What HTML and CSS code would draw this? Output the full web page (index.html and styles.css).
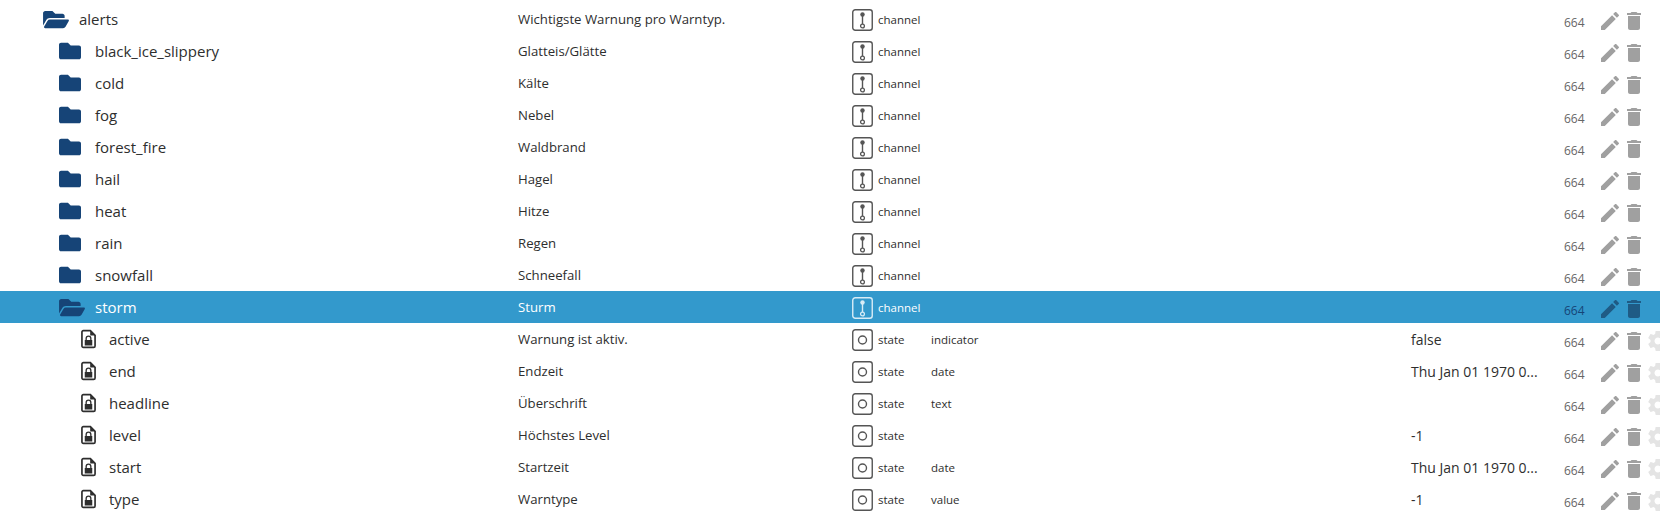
FILE: index.html
```html
<!DOCTYPE html>
<html lang="en">
<head>
    <meta charset="UTF-8">
    <title>Objects</title>
    <link rel="stylesheet" href="styles.css">
</head>
<body>
    <svg class="sprite" xmlns="http://www.w3.org/2000/svg">
        <symbol id="i-folder" viewBox="0 0 512 512"><path d="M464 128H272l-64-64H48C21.49 64 0 85.49 0 112v288c0 26.51 21.49 48 48 48h416c26.51 0 48-21.49 48-48V176c0-26.51-21.49-48-48-48z"/></symbol>
        <symbol id="i-open" viewBox="0 0 576 512"><path d="M572.694 292.093L500.27 416.248A63.997 63.997 0 0 1 444.989 448H45.025c-18.523 0-30.064-20.093-20.731-36.093l72.424-124.155A64 64 0 0 1 152 256h399.964c18.523 0 30.064 20.093 20.73 36.093zM152 224h328v-48c0-26.51-21.49-48-48-48H272l-64-64H48C21.49 64 0 85.49 0 112v278.046l69.077-118.418C86.214 242.25 118.202 224 152 224z"/></symbol>
        <symbol id="i-file" viewBox="0 0 16 20"><path d="M2.5 1H10l5 5v11.5a1.5 1.5 0 0 1-1.5 1.5h-11A1.5 1.5 0 0 1 1 17.500v-15A1.500 1.500 0 0 1 2.500 1z" fill="none" stroke="currentColor" stroke-width="1.800"/><path d="M9.800 .8v5.400h5.400z"/><path d="M4.800 11v-1.500a3.200 3.200 0 0 1 6.400 0V11h.8v6H4v-6zM6.200 11h3.600V9.500a1.800 1.800 0 0 0-3.600 0z"/></symbol>
        <symbol id="i-channel" viewBox="0 0 21 22"><rect x=".75" y=".75" width="19.500" height="20.500" rx="2.500" fill="none" stroke="currentColor" stroke-width="1.400"/><circle cx="10.500" cy="5.500" r="2.200"/><path d="M9.800 6h1.400v9h-1.400z"/><circle cx="10.500" cy="17" r="1.900" fill="none" stroke="currentColor" stroke-width="1.300"/></symbol>
        <symbol id="i-state" viewBox="0 0 21 22"><rect x=".75" y=".75" width="19.500" height="20.500" rx="2.500" fill="none" stroke="currentColor" stroke-width="1.400"/><circle cx="10.500" cy="11" r="4" fill="none" stroke="currentColor" stroke-width="1.400"/></symbol>
        <symbol id="i-edit" viewBox="3 3 18 18"><path d="M3 17.250V21h3.750L17.810 9.940l-3.750-3.750L3 17.250zM20.710 7.040c.39-.39.39-1.020 0-1.410l-2.340-2.340c-.39-.39-1.020-.39-1.410 0l-1.830 1.830 3.750 3.750 1.830-1.830z"/></symbol>
        <symbol id="i-trash" viewBox="5 3 14 18"><path d="M6 19c0 1.100.9 2 2 2h8c1.100 0 2-.9 2-2V7H6v12zM19 4h-3.500l-1-1h-5l-1 1H5v2h14V4z"/></symbol>
        <symbol id="i-gear" viewBox="2 2 20 20"><path d="M19.430 12.980c.04-.32.07-.64.07-.98s-.03-.66-.07-.98l2.110-1.650c.19-.15.24-.42.12-.64l-2-3.460c-.12-.22-.39-.3-.61-.22l-2.490 1c-.52-.4-1.080-.73-1.690-.98l-.38-2.650C14.460 2.180 14.250 2 14 2h-4c-.25 0-.46.18-.49.42l-.38 2.650c-.61.25-1.170.59-1.690.98l-2.490-1c-.23-.09-.49 0-.61.22l-2 3.460c-.13.22-.07.49.12.64l2.110 1.650c-.04.32-.07.65-.07.98s.03.66.07.98l-2.110 1.650c-.19.15-.24.42-.12.64l2 3.460c.12.22.39.3.61.22l2.490-1c.52.4 1.080.73 1.690.98l.38 2.650c.03.24.24.42.49.42h4c.25 0 .46-.18.49-.42l.38-2.650c.61-.25 1.170-.59 1.690-.98l2.490 1c.23.09.49 0 .61-.22l2-3.460c.12-.22.07-.49-.12-.64l-2.110-1.650zM12 15.500c-1.930 0-3.500-1.570-3.500-3.500s1.570-3.500 3.500-3.500 3.500 1.570 3.500 3.500-1.570 3.500-3.500 3.500z"/></symbol>
    </svg>

    <div class="tree">
        <div class="row">
            <div class="name level-0"><svg class="icon-open"><use href="#i-open"/></svg>alerts</div>
            <div class="desc">Wichtigste Warnung pro Warntyp.</div>
            <div class="type"><svg class="icon-type"><use href="#i-channel"/></svg>channel</div>
            <div class="role"></div><div class="value"></div><div class="rights">664</div>
            <div class="actions"><svg class="icon-edit"><use href="#i-edit"/></svg><svg class="icon-trash"><use href="#i-trash"/></svg></div>
        </div>
        <div class="row">
            <div class="name level-1"><svg class="icon-folder"><use href="#i-folder"/></svg>black_ice_slippery</div>
            <div class="desc">Glatteis/Glätte</div>
            <div class="type"><svg class="icon-type"><use href="#i-channel"/></svg>channel</div>
            <div class="role"></div><div class="value"></div><div class="rights">664</div>
            <div class="actions"><svg class="icon-edit"><use href="#i-edit"/></svg><svg class="icon-trash"><use href="#i-trash"/></svg></div>
        </div>
        <div class="row">
            <div class="name level-1"><svg class="icon-folder"><use href="#i-folder"/></svg>cold</div>
            <div class="desc">Kälte</div>
            <div class="type"><svg class="icon-type"><use href="#i-channel"/></svg>channel</div>
            <div class="role"></div><div class="value"></div><div class="rights">664</div>
            <div class="actions"><svg class="icon-edit"><use href="#i-edit"/></svg><svg class="icon-trash"><use href="#i-trash"/></svg></div>
        </div>
        <div class="row">
            <div class="name level-1"><svg class="icon-folder"><use href="#i-folder"/></svg>fog</div>
            <div class="desc">Nebel</div>
            <div class="type"><svg class="icon-type"><use href="#i-channel"/></svg>channel</div>
            <div class="role"></div><div class="value"></div><div class="rights">664</div>
            <div class="actions"><svg class="icon-edit"><use href="#i-edit"/></svg><svg class="icon-trash"><use href="#i-trash"/></svg></div>
        </div>
        <div class="row">
            <div class="name level-1"><svg class="icon-folder"><use href="#i-folder"/></svg>forest_fire</div>
            <div class="desc">Waldbrand</div>
            <div class="type"><svg class="icon-type"><use href="#i-channel"/></svg>channel</div>
            <div class="role"></div><div class="value"></div><div class="rights">664</div>
            <div class="actions"><svg class="icon-edit"><use href="#i-edit"/></svg><svg class="icon-trash"><use href="#i-trash"/></svg></div>
        </div>
        <div class="row">
            <div class="name level-1"><svg class="icon-folder"><use href="#i-folder"/></svg>hail</div>
            <div class="desc">Hagel</div>
            <div class="type"><svg class="icon-type"><use href="#i-channel"/></svg>channel</div>
            <div class="role"></div><div class="value"></div><div class="rights">664</div>
            <div class="actions"><svg class="icon-edit"><use href="#i-edit"/></svg><svg class="icon-trash"><use href="#i-trash"/></svg></div>
        </div>
        <div class="row">
            <div class="name level-1"><svg class="icon-folder"><use href="#i-folder"/></svg>heat</div>
            <div class="desc">Hitze</div>
            <div class="type"><svg class="icon-type"><use href="#i-channel"/></svg>channel</div>
            <div class="role"></div><div class="value"></div><div class="rights">664</div>
            <div class="actions"><svg class="icon-edit"><use href="#i-edit"/></svg><svg class="icon-trash"><use href="#i-trash"/></svg></div>
        </div>
        <div class="row">
            <div class="name level-1"><svg class="icon-folder"><use href="#i-folder"/></svg>rain</div>
            <div class="desc">Regen</div>
            <div class="type"><svg class="icon-type"><use href="#i-channel"/></svg>channel</div>
            <div class="role"></div><div class="value"></div><div class="rights">664</div>
            <div class="actions"><svg class="icon-edit"><use href="#i-edit"/></svg><svg class="icon-trash"><use href="#i-trash"/></svg></div>
        </div>
        <div class="row">
            <div class="name level-1"><svg class="icon-folder"><use href="#i-folder"/></svg>snowfall</div>
            <div class="desc">Schneefall</div>
            <div class="type"><svg class="icon-type"><use href="#i-channel"/></svg>channel</div>
            <div class="role"></div><div class="value"></div><div class="rights">664</div>
            <div class="actions"><svg class="icon-edit"><use href="#i-edit"/></svg><svg class="icon-trash"><use href="#i-trash"/></svg></div>
        </div>
        <div class="row selected">
            <div class="name level-1"><svg class="icon-open"><use href="#i-open"/></svg>storm</div>
            <div class="desc">Sturm</div>
            <div class="type"><svg class="icon-type"><use href="#i-channel"/></svg>channel</div>
            <div class="role"></div><div class="value"></div><div class="rights">664</div>
            <div class="actions"><svg class="icon-edit"><use href="#i-edit"/></svg><svg class="icon-trash"><use href="#i-trash"/></svg></div>
        </div>
        <div class="row">
            <div class="name level-2"><svg class="icon-file"><use href="#i-file"/></svg>active</div>
            <div class="desc">Warnung ist aktiv.</div>
            <div class="type"><svg class="icon-type"><use href="#i-state"/></svg>state</div>
            <div class="role">indicator</div><div class="value">false</div><div class="rights">664</div>
            <div class="actions"><svg class="icon-edit"><use href="#i-edit"/></svg><svg class="icon-trash"><use href="#i-trash"/></svg><svg class="icon-gear"><use href="#i-gear"/></svg></div>
        </div>
        <div class="row">
            <div class="name level-2"><svg class="icon-file"><use href="#i-file"/></svg>end</div>
            <div class="desc">Endzeit</div>
            <div class="type"><svg class="icon-type"><use href="#i-state"/></svg>state</div>
            <div class="role">date</div><div class="value">Thu Jan 01 1970 0...</div><div class="rights">664</div>
            <div class="actions"><svg class="icon-edit"><use href="#i-edit"/></svg><svg class="icon-trash"><use href="#i-trash"/></svg><svg class="icon-gear"><use href="#i-gear"/></svg></div>
        </div>
        <div class="row">
            <div class="name level-2"><svg class="icon-file"><use href="#i-file"/></svg>headline</div>
            <div class="desc">Überschrift</div>
            <div class="type"><svg class="icon-type"><use href="#i-state"/></svg>state</div>
            <div class="role">text</div><div class="value"></div><div class="rights">664</div>
            <div class="actions"><svg class="icon-edit"><use href="#i-edit"/></svg><svg class="icon-trash"><use href="#i-trash"/></svg><svg class="icon-gear"><use href="#i-gear"/></svg></div>
        </div>
        <div class="row">
            <div class="name level-2"><svg class="icon-file"><use href="#i-file"/></svg>level</div>
            <div class="desc">Höchstes Level</div>
            <div class="type"><svg class="icon-type"><use href="#i-state"/></svg>state</div>
            <div class="role"></div><div class="value">-1</div><div class="rights">664</div>
            <div class="actions"><svg class="icon-edit"><use href="#i-edit"/></svg><svg class="icon-trash"><use href="#i-trash"/></svg><svg class="icon-gear"><use href="#i-gear"/></svg></div>
        </div>
        <div class="row">
            <div class="name level-2"><svg class="icon-file"><use href="#i-file"/></svg>start</div>
            <div class="desc">Startzeit</div>
            <div class="type"><svg class="icon-type"><use href="#i-state"/></svg>state</div>
            <div class="role">date</div><div class="value">Thu Jan 01 1970 0...</div><div class="rights">664</div>
            <div class="actions"><svg class="icon-edit"><use href="#i-edit"/></svg><svg class="icon-trash"><use href="#i-trash"/></svg><svg class="icon-gear"><use href="#i-gear"/></svg></div>
        </div>
        <div class="row">
            <div class="name level-2"><svg class="icon-file"><use href="#i-file"/></svg>type</div>
            <div class="desc">Warntype</div>
            <div class="type"><svg class="icon-type"><use href="#i-state"/></svg>state</div>
            <div class="role">value</div><div class="value">-1</div><div class="rights">664</div>
            <div class="actions"><svg class="icon-edit"><use href="#i-edit"/></svg><svg class="icon-trash"><use href="#i-trash"/></svg><svg class="icon-gear"><use href="#i-gear"/></svg></div>
        </div>
    </div>
</body>
</html>
```

FILE: styles.css
```css
body, html {
    margin: 0;
    padding: 0;
    overflow: hidden;
    background-color: #fff;
    font-family: "Open Sans", "Noto Sans", sans-serif;
}
.sprite {
    display: none;
}
.tree {
    padding-top: 3px;
    color: #2e2e2e;
}
.row {
    display: grid;
    grid-template-columns: 518px 334px 79px 480px 153px 37px 1fr;
    height: 32px;
    align-items: center;
    overflow: hidden;
}
.row svg {
    fill: currentColor;
    flex: none;
}
.name {
    display: flex;
    align-items: center;
    font-size: 15px;
}
.level-0 {
    padding-left: 43px;
}
.level-1 {
    padding-left: 59px;
}
.level-2 {
    padding-left: 81px;
}
.icon-open {
    width: 26px;
    height: 23px;
    margin-right: 10px;
    color: #164477;
}
.icon-folder {
    width: 22px;
    height: 22px;
    margin-right: 14px;
    color: #164477;
}
.icon-file {
    width: 15px;
    height: 20px;
    margin-right: 13px;
}
.desc {
    font-size: 13.200px;
}
.type {
    display: flex;
    align-items: center;
    font-size: 11.500px;
}
.icon-type {
    width: 21px;
    height: 22px;
    margin-right: 5px;
    color: #555;
    position: relative;
    top: 1px;
}
.role {
    font-size: 11.500px;
}
.value {
    font-size: 14px;
}
.rights {
    position: relative;
    top: 3px;
    font-size: 12px;
    color: #666;
}
.actions {
    display: flex;
    align-items: center;
    position: relative;
    top: 2px;
    color: #a0a0a0;
}
.icon-edit {
    width: 18px;
    height: 18px;
    margin-right: 8px;
}
.icon-trash {
    width: 14px;
    height: 18px;
    margin-right: 7px;
}
.icon-gear {
    width: 20px;
    height: 20px;
    color: #e4e4e4;
}
.selected {
    background-color: #3399cc;
    color: #fff;
}
.selected .icon-type {
    color: #d8ecf6;
}
.selected .rights {
    color: #164477;
}
.selected .actions {
    color: #1f5b85;
}
```
